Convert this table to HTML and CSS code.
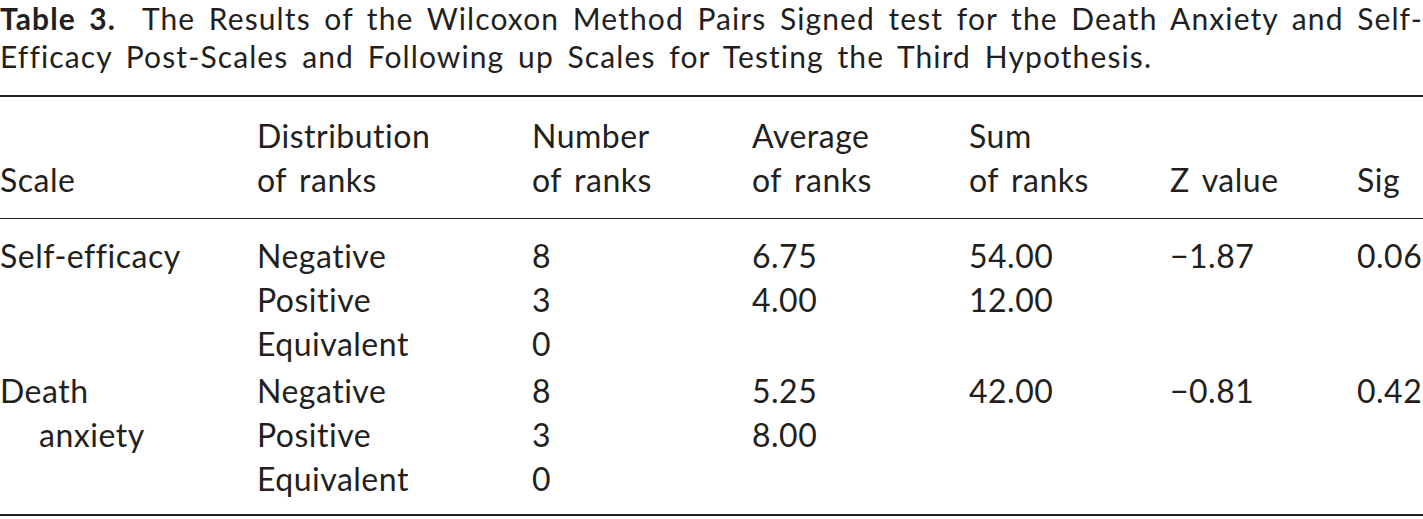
FILE: index.html
```html
<!DOCTYPE html>
<html lang="en">
<head>
<meta charset="utf-8">
<title>Table 3</title>
<link rel="stylesheet" href="styles.css">
</head>
<body>
<figure class="table-figure">
  <figcaption class="caption">
    <span class="caption-line first-line"><span class="caption-label">Table 3.</span>The Results of the Wilcoxon Method Pairs Signed test for the Death Anxiety and Self-</span>
    <span class="caption-line second-line">Efficacy Post-Scales and Following up Scales for Testing the Third Hypothesis.</span>
  </figcaption>
  <table class="results">
    <colgroup>
      <col class="c-scale">
      <col class="c-dist">
      <col class="c-num">
      <col class="c-avg">
      <col class="c-sum">
      <col class="c-z">
      <col class="c-sig">
    </colgroup>
    <thead>
      <tr>
        <th>Scale</th>
        <th>Distribution<br>of ranks</th>
        <th>Number<br>of ranks</th>
        <th>Average<br>of ranks</th>
        <th>Sum<br>of ranks</th>
        <th>Z value</th>
        <th>Sig</th>
      </tr>
    </thead>
    <tbody>
      <tr class="group-start first">
        <td rowspan="3" class="scale">Self-efficacy</td>
        <td>Negative</td><td>8</td><td>6.75</td><td>54.00</td><td>&minus;1.87</td><td>0.06</td>
      </tr>
      <tr>
        <td>Positive</td><td>3</td><td>4.00</td><td>12.00</td><td></td><td></td>
      </tr>
      <tr>
        <td>Equivalent</td><td>0</td><td></td><td></td><td></td><td></td>
      </tr>
      <tr class="group-start">
        <td rowspan="3" class="scale"><span class="hang">Death<br>anxiety</span></td>
        <td>Negative</td><td>8</td><td>5.25</td><td>42.00</td><td>&minus;0.81</td><td>0.42</td>
      </tr>
      <tr>
        <td>Positive</td><td>3</td><td>8.00</td><td></td><td></td><td></td>
      </tr>
      <tr class="last">
        <td>Equivalent</td><td>0</td><td></td><td></td><td></td><td></td>
      </tr>
    </tbody>
  </table>
</figure>
</body>
</html>
```

FILE: styles.css
```css
html, body {
  margin: 0;
  padding: 0;
  background: #ffffff;
}

body {
  font-family: Lato, "Open Sans", "Liberation Sans", sans-serif;
  color: #231f20;
  font-size: 32px;
  letter-spacing: 0.5px;
}

.table-figure {
  margin: 0;
  width: 1423px;
}

.caption {
  font-size: 30px;
  letter-spacing: 1.1px;
}

.caption-line {
  display: block;
  white-space: nowrap;
  line-height: 36px;
}

.first-line {
  text-align: justify;
  text-align-last: justify;
}

.second-line {
  padding-top: 2px;
  word-spacing: 5px;
}

.caption-label {
  font-weight: 700;
  margin-right: 26px;
}

.results {
  width: 100%;
  border-collapse: collapse;
  table-layout: fixed;
  margin-top: 21px;
  border-top: 2px solid #231f20;
  border-bottom: 2px solid #231f20;
  word-spacing: 4px;
}

.c-scale { width: 257px; }
.c-dist { width: 275px; }
.c-num { width: 220px; }
.c-avg { width: 217px; }
.c-sum { width: 201px; }
.c-z { width: 187px; }
.c-sig { width: 66px; }

.results th,
.results td {
  padding: 0;
  text-align: left;
  font-weight: 400;
  line-height: 44px;
  vertical-align: top;
  white-space: nowrap;
}

.results th {
  vertical-align: bottom;
  padding-top: 17px;
  padding-bottom: 16px;
  border-bottom: 1px solid #231f20;
}

.results tr.first td {
  padding-top: 15px;
}

.results tr.group-start:not(.first) td {
  padding-top: 3px;
}

.results tr.last td {
  padding-bottom: 13px;
}

.results td.scale {
  padding-bottom: 0;
}

.hang {
  display: block;
  padding-left: 39px;
  text-indent: -39px;
}
```
